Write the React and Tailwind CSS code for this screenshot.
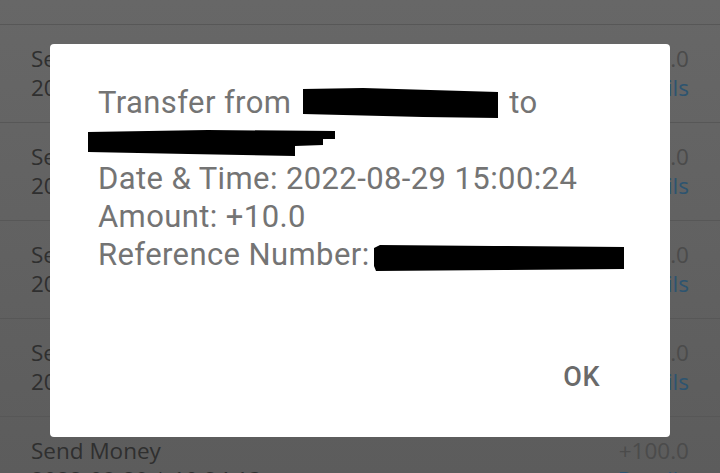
import React from 'react'

const rows = [
  { time: '15:00:24' },
  { time: '14:58:02' },
  { time: '14:31:17' },
  { time: '13:05:51' },
  { time: '10:24:13' },
]

const Row = ({ time }) => (
  <div className="flex justify-between h-[98px] border-b border-[#575757] px-[31px] pt-[19px]">
    <div className="flex flex-col text-[#2f2f2f] text-[22.5px] leading-[29px]">
      <span>Send Money</span>
      <span>2022-08-29 | {time}</span>
    </div>
    <div className="flex flex-col items-end text-[22.5px] leading-[29px]">
      <span className="text-[#4b4b4b]">+100.0</span>
      <span className="text-[#2d5470]">Details</span>
    </div>
  </div>
)

const App = () => {
  return (
    <div className="relative w-[720px] h-[473px] overflow-hidden bg-gradient-to-b from-[#676767] to-[#5c5c5c] font-['Open_Sans',sans-serif]">
      <div className="flex flex-col">
        <div className="h-[25px] border-b border-[#575757]" />
        {rows.map((r, i) => (
          <Row key={i} time={r.time} />
        ))}
      </div>

      {/* dialog */}
      <div className="absolute top-[44px] left-[50px] w-[620px] h-[393px] bg-white rounded-[4px] flex flex-col font-['Roboto',sans-serif]">
        <div className="pl-[48px] pt-[40px] text-[31px] leading-[38px] tracking-[0.4px] text-[#747474]">
          <div className="flex items-start h-[38px]">
            <span>Transfer from</span>
            <svg width="196" height="38" className="ml-[12px] shrink-0">
              <polygon points="0,5 60,4 195,8 195,34 120,33 0,30" fill="#000" />
            </svg>
            <span className="ml-[10px]">to</span>
          </div>
          <div className="flex items-start h-[38px] -ml-[10px]">
            <svg width="250" height="38" className="shrink-0">
              <polygon points="0,10 120,8 247,9 247,17 0,18" fill="#000" />
              <polygon points="0,17 235,16 235,23 207,24 207,34 100,32 0,30" fill="#000" />
            </svg>
          </div>
          <div>Date &amp; Time: 2022-08-29 15:00:24</div>
          <div>Amount: +10.0</div>
          <div className="flex items-start h-[38px]">
            <span>Reference Number:</span>
            <svg width="252" height="38" className="ml-[4px] shrink-0">
              <polygon points="0,12 6,9 120,10 250,11 250,33 130,34 2,35 0,30" fill="#000" />
            </svg>
          </div>
        </div>
        <div className="mt-auto flex justify-end pr-[54px] pb-[36px]">
          <button className="h-[48px] px-[16px] text-[27px] font-medium text-[#6a6a6a] tracking-[0.5px]">
            OK
          </button>
        </div>
      </div>
    </div>
  )
}

export default App
